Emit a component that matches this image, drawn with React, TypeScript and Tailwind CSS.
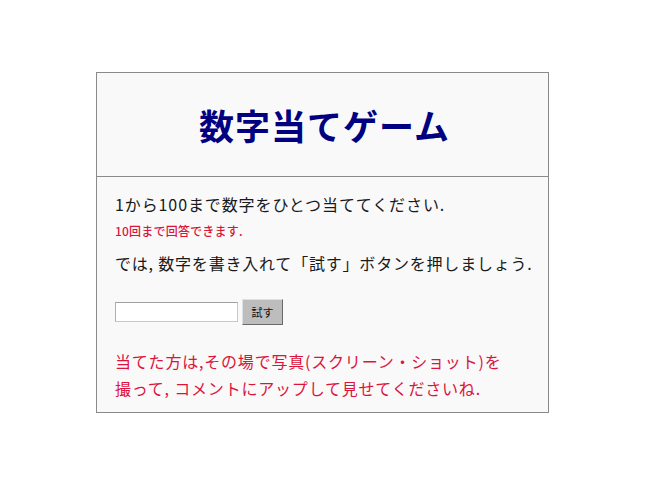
import { useState } from 'react';

const jp = { fontFamily: '"Noto Sans CJK JP", "Noto Sans", sans-serif' };

export default function App() {
  const [guess, setGuess] = useState('');

  return (
    <div className="min-h-[485px] w-full bg-white pt-[72px]" style={jp}>
      <div className="ml-[96px] w-[453px] border border-[#8a8a8a] bg-[#f9f9f9]">
        <div className="flex h-[104px] items-center justify-center border-b border-[#8a8a8a] pl-[4px]">
          <h1 className="text-[35px] font-bold leading-none tracking-[1px] text-[#000080]">数字当てゲーム</h1>
        </div>

        <div className="pl-[18px] pr-2 pt-[15px] pb-[10px]">
          <p className="text-[16px] leading-[24px] tracking-[0.9px] text-[#1a1a1a]">1から100まで数字をひとつ当ててください.</p>
          <p className="mt-[6px] text-[12px] font-medium leading-[18px] tracking-[0.2px] text-[#dc143c]">10回まで回答できます.</p>
          <p className="mt-[11px] text-[16px] leading-[24px] tracking-[0.8px] text-[#1a1a1a]">
            では, 数字を書き入れて「試す」ボタンを押しましょう.
          </p>

          <div className="mt-[24px] flex items-center gap-[4px]">
            <input
              value={guess}
              onChange={(e) => setGuess(e.target.value)}
              className="h-[20px] w-[123px] border border-[#c8c8c8] border-t-[#a0a0a0] border-l-[#b0b0b0] bg-white text-[12px] outline-none"
            />
            <button className="h-[26px] w-[41px] border border-[#e0e0e0] border-b-[#6a6a6a] border-r-[#6a6a6a] bg-[#bdbdbd] text-[11px] text-[#111]">
              試す
            </button>
          </div>

          <p className="mt-[23px] text-[16px] leading-[27px] tracking-[0.8px] text-[#dc143c]">
            当てた方は,その場で写真(スクリーン・ショット)を
            <br />
            撮って, コメントにアップして見せてくださいね.
          </p>
        </div>
      </div>
    </div>
  );
}
